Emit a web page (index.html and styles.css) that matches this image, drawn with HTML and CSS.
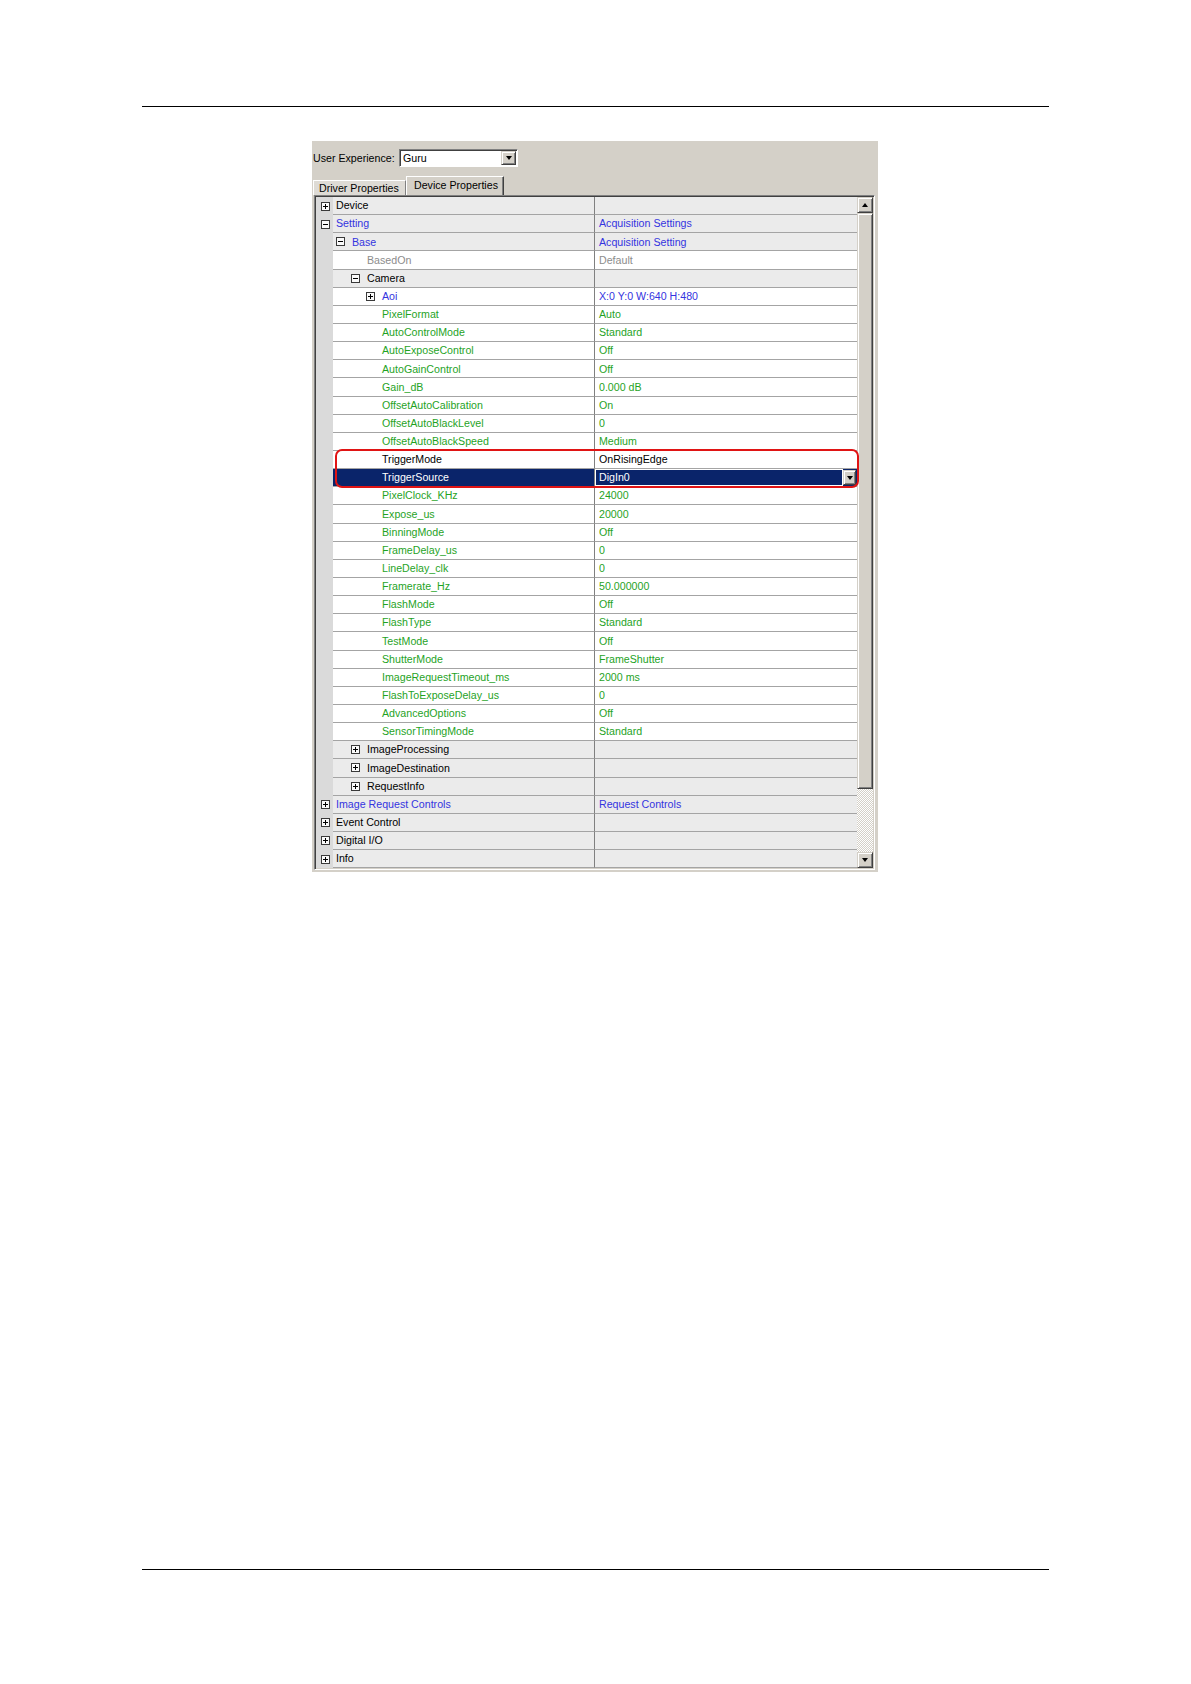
FILE: index.html
```html
<!DOCTYPE html>
<html>
<head>
<meta charset="utf-8">
<title>Device Properties</title>
<link rel="stylesheet" href="styles.css">
</head>
<body>
<div class="page">
  <div class="rule"></div>
  <div class="panel">
    <div class="toolbar">
      <span class="label">User Experience:</span>
      <div class="combo">
        <span class="combo-text">Guru</span>
        <span class="btn3d combo-btn"><i class="arrow-down"></i></span>
      </div>
    </div>
    <div class="tabs">
      <div class="tab">Driver Properties</div>
      <div class="tab active">Device Properties</div>
    </div>
    <div class="grid">
      <div class="rows">
        <div class="row cat"><span class="gut"><i class="tog plus"></i></span><span class="name c0">Device</span><span class="val"></span></div>
        <div class="row cat"><span class="gut"><i class="tog minus"></i></span><span class="name c0 blue">Setting</span><span class="val blue">Acquisition Settings</span></div>
        <div class="row cat"><span class="gut"></span><span class="name c1 blue"><i class="tog minus"></i>Base</span><span class="val blue">Acquisition Setting</span></div>
        <div class="row prop"><span class="gut"></span><span class="name p2 gray">BasedOn</span><span class="val gray">Default</span></div>
        <div class="row cat"><span class="gut"></span><span class="name c2"><i class="tog minus"></i>Camera</span><span class="val"></span></div>
        <div class="row prop"><span class="gut"></span><span class="name c3 blue"><i class="tog plus"></i>Aoi</span><span class="val blue">X:0 Y:0 W:640 H:480</span></div>
        <div class="row prop"><span class="gut"></span><span class="name p3 green">PixelFormat</span><span class="val green">Auto</span></div>
        <div class="row prop"><span class="gut"></span><span class="name p3 green">AutoControlMode</span><span class="val green">Standard</span></div>
        <div class="row prop"><span class="gut"></span><span class="name p3 green">AutoExposeControl</span><span class="val green">Off</span></div>
        <div class="row prop"><span class="gut"></span><span class="name p3 green">AutoGainControl</span><span class="val green">Off</span></div>
        <div class="row prop"><span class="gut"></span><span class="name p3 green">Gain_dB</span><span class="val green">0.000 dB</span></div>
        <div class="row prop"><span class="gut"></span><span class="name p3 green">OffsetAutoCalibration</span><span class="val green">On</span></div>
        <div class="row prop"><span class="gut"></span><span class="name p3 green">OffsetAutoBlackLevel</span><span class="val green">0</span></div>
        <div class="row prop"><span class="gut"></span><span class="name p3 green">OffsetAutoBlackSpeed</span><span class="val green">Medium</span></div>
        <div class="trig">
          <div class="row prop"><span class="gut"></span><span class="name p3">TriggerMode</span><span class="val">OnRisingEdge</span></div>
          <div class="row prop sel"><span class="gut"></span><span class="name p3">TriggerSource</span><span class="val"><span class="editor"><span class="editor-text">DigIn0</span><span class="btn3d dd-btn"><i class="arrow-down"></i></span></span></span></div>
        </div>
        <div class="row prop"><span class="gut"></span><span class="name p3 green">PixelClock_KHz</span><span class="val green">24000</span></div>
        <div class="row prop"><span class="gut"></span><span class="name p3 green">Expose_us</span><span class="val green">20000</span></div>
        <div class="row prop"><span class="gut"></span><span class="name p3 green">BinningMode</span><span class="val green">Off</span></div>
        <div class="row prop"><span class="gut"></span><span class="name p3 green">FrameDelay_us</span><span class="val green">0</span></div>
        <div class="row prop"><span class="gut"></span><span class="name p3 green">LineDelay_clk</span><span class="val green">0</span></div>
        <div class="row prop"><span class="gut"></span><span class="name p3 green">Framerate_Hz</span><span class="val green">50.000000</span></div>
        <div class="row prop"><span class="gut"></span><span class="name p3 green">FlashMode</span><span class="val green">Off</span></div>
        <div class="row prop"><span class="gut"></span><span class="name p3 green">FlashType</span><span class="val green">Standard</span></div>
        <div class="row prop"><span class="gut"></span><span class="name p3 green">TestMode</span><span class="val green">Off</span></div>
        <div class="row prop"><span class="gut"></span><span class="name p3 green">ShutterMode</span><span class="val green">FrameShutter</span></div>
        <div class="row prop"><span class="gut"></span><span class="name p3 green">ImageRequestTimeout_ms</span><span class="val green">2000 ms</span></div>
        <div class="row prop"><span class="gut"></span><span class="name p3 green">FlashToExposeDelay_us</span><span class="val green">0</span></div>
        <div class="row prop"><span class="gut"></span><span class="name p3 green">AdvancedOptions</span><span class="val green">Off</span></div>
        <div class="row prop"><span class="gut"></span><span class="name p3 green">SensorTimingMode</span><span class="val green">Standard</span></div>
        <div class="row cat"><span class="gut"></span><span class="name c2"><i class="tog plus"></i>ImageProcessing</span><span class="val"></span></div>
        <div class="row cat"><span class="gut"></span><span class="name c2"><i class="tog plus"></i>ImageDestination</span><span class="val"></span></div>
        <div class="row cat"><span class="gut"></span><span class="name c2"><i class="tog plus"></i>RequestInfo</span><span class="val"></span></div>
        <div class="row cat"><span class="gut"><i class="tog plus"></i></span><span class="name c0 blue">Image Request Controls</span><span class="val blue">Request Controls</span></div>
        <div class="row cat"><span class="gut"><i class="tog plus"></i></span><span class="name c0">Event Control</span><span class="val"></span></div>
        <div class="row cat"><span class="gut"><i class="tog plus"></i></span><span class="name c0">Digital I/O</span><span class="val"></span></div>
        <div class="row cat"><span class="gut"><i class="tog plus"></i></span><span class="name c0">Info</span><span class="val"></span></div>
      </div>
      <div class="vscroll">
        <span class="btn3d sb-btn"><i class="arrow-up"></i></span>
        <span class="btn3d thumb"></span>
        <span class="track"></span>
        <span class="btn3d sb-btn"><i class="arrow-down"></i></span>
      </div>
    </div>
  </div>
  <div class="rule rule-bottom"></div>
</div>
</body>
</html>
```

FILE: styles.css
```css
html, body {
  margin: 0;
  background: #ffffff;
}

body {
  font-family: "Liberation Sans", Arial, sans-serif;
  color: #000;
}

.page {
  height: 1684px;
  box-sizing: border-box;
  padding: 106px 142px 0;
  display: flex;
  flex-direction: column;
}

.rule {
  width: 907px;
  height: 0;
  border-top: 1px solid #000;
  flex: none;
}

.rule-bottom {
  margin-top: auto;
  margin-bottom: 114px;
}

/* ---------- panel ---------- */
.panel {
  margin: 34px 0 0 170px;
  width: 566px;
  box-sizing: border-box;
  background: #d4d0c8;
  padding: 8px 0 2px 0;
  font-size: 10.65px;
  line-height: 1;
}

.toolbar {
  display: flex;
  align-items: center;
  height: 18px;
  padding-left: 1px;
}

.label {
  width: 86px;
  flex: none;
}

.combo {
  width: 119px;
  height: 18px;
  box-sizing: border-box;
  background: #fff;
  border: 1px solid;
  border-color: #808080 #ffffff #ffffff #808080;
  box-shadow: inset 1px 1px #404040;
  display: flex;
  align-items: center;
  padding: 1px;
}

.combo-text {
  flex: 1;
  padding-left: 2px;
}

.btn3d {
  background: #d4d0c8;
  box-sizing: border-box;
  border: 1px solid;
  border-color: #d4d0c8 #404040 #404040 #d4d0c8;
  box-shadow: inset 1px 1px #ffffff, inset -1px -1px #808080;
  display: flex;
  align-items: center;
  justify-content: center;
}

.combo-btn {
  width: 15px;
  height: 14px;
  flex: none;
}

.arrow-down,
.arrow-up {
  display: block;
  width: 0;
  height: 0;
  border-left: 3.5px solid transparent;
  border-right: 3.5px solid transparent;
}

.arrow-down {
  border-top: 4px solid #000;
}

.arrow-up {
  border-bottom: 4px solid #000;
}

/* ---------- tabs ---------- */
.tabs {
  display: flex;
  align-items: flex-end;
  height: 19px;
  margin-top: 9px;
  padding-left: 1px;
}

.tab {
  height: 15px;
  width: 93px;
  box-sizing: border-box;
  padding-left: 5px;
  border-top: 1px solid #ffffff;
  border-left: 1px solid #ffffff;
  border-right: 1px solid #808080;
  background: #dedbd5;
  display: flex;
  align-items: center;
  white-space: nowrap;
}

.tab.active {
  height: 19px;
  width: 98px;
  padding-left: 7px;
  padding-bottom: 2px;
  background: #d4d0c8;
  border-right: 1px solid #404040;
  box-shadow: inset -1px 0 #808080;
}

/* ---------- grid ---------- */
.grid {
  margin-left: 2px;
  width: 561px;
  box-sizing: border-box;
  border: 1px solid;
  border-color: #808080 #ffffff #ffffff #808080;
  box-shadow: inset 1px 1px #404040, inset -1px -1px #d4d0c8;
  padding: 1px;
  display: flex;
}

.rows {
  width: 541px;
  flex: none;
  background: #fff;
}

.row {
  display: flex;
  height: 18.15px;
}

.gut {
  width: 17px;
  flex: none;
  background: #dadada;
  display: flex;
  align-items: center;
  padding-left: 5px;
  box-sizing: border-box;
}

.name {
  width: 262px;
  flex: none;
  box-sizing: border-box;
  border-right: 1px solid #808080;
  border-bottom: 1px solid #a4a4a4;
  display: flex;
  align-items: center;
  white-space: nowrap;
  overflow: hidden;
}

.val {
  flex: 1;
  box-sizing: border-box;
  border-bottom: 1px solid #a4a4a4;
  padding-left: 4px;
  display: flex;
  align-items: center;
  white-space: nowrap;
  overflow: hidden;
}

.cat .name,
.cat .val {
  background: #ebebeb;
}

.c0 { padding-left: 3px; }
.c1 { padding-left: 3px; }
.c2 { padding-left: 18px; }
.c3 { padding-left: 33px; }
.p2 { padding-left: 34px; }
.p3 { padding-left: 49px; }

.blue { color: #3434e0; }
.green { color: #1fa31f; }
.gray { color: #8c8c8c; }

/* expand / collapse box */
.tog {
  position: relative;
  display: block;
  width: 9px;
  height: 9px;
  box-sizing: border-box;
  border: 1px solid #3a3a3a;
  background: #fafafa;
  flex: none;
}

.name .tog {
  margin-right: 7px;
}

.tog::before {
  content: "";
  position: absolute;
  left: 1px;
  top: 3px;
  width: 5px;
  height: 1px;
  background: #000;
}

.tog.plus::after {
  content: "";
  position: absolute;
  left: 3px;
  top: 1px;
  width: 1px;
  height: 5px;
  background: #000;
}

/* selected row */
.sel .name,
.sel .val {
  background: #0a246a;
  color: #ffffff;
}

.sel .val {
  padding-left: 0;
  padding-right: 1px;
}

.editor {
  flex: 1;
  height: 100%;
  display: flex;
  align-items: center;
}

.editor-text {
  flex: 1;
  height: 100%;
  box-sizing: border-box;
  border: 1px solid #ffffff;
  display: flex;
  align-items: center;
  padding-left: 3px;
}

.dd-btn {
  width: 13px;
  height: 15px;
  flex: none;
}

/* highlight around trigger rows */
.trig {
  position: relative;
}

.trig::after {
  content: "";
  position: absolute;
  left: 19px;
  right: -2px;
  top: -2px;
  bottom: -1px;
  border: 2px solid #e01414;
  border-radius: 7px;
  pointer-events: none;
}

/* scrollbar */
.vscroll {
  width: 16px;
  flex: none;
  display: flex;
  flex-direction: column;
}

.sb-btn {
  height: 16px;
  flex: none;
}

.thumb {
  height: 576px;
  flex: none;
}

.track {
  flex: 1;
  background-color: #ffffff;
  background-image: repeating-conic-gradient(#d4d0c8 0 25%, #ffffff 0 50%);
  background-size: 2px 2px;
}
```
